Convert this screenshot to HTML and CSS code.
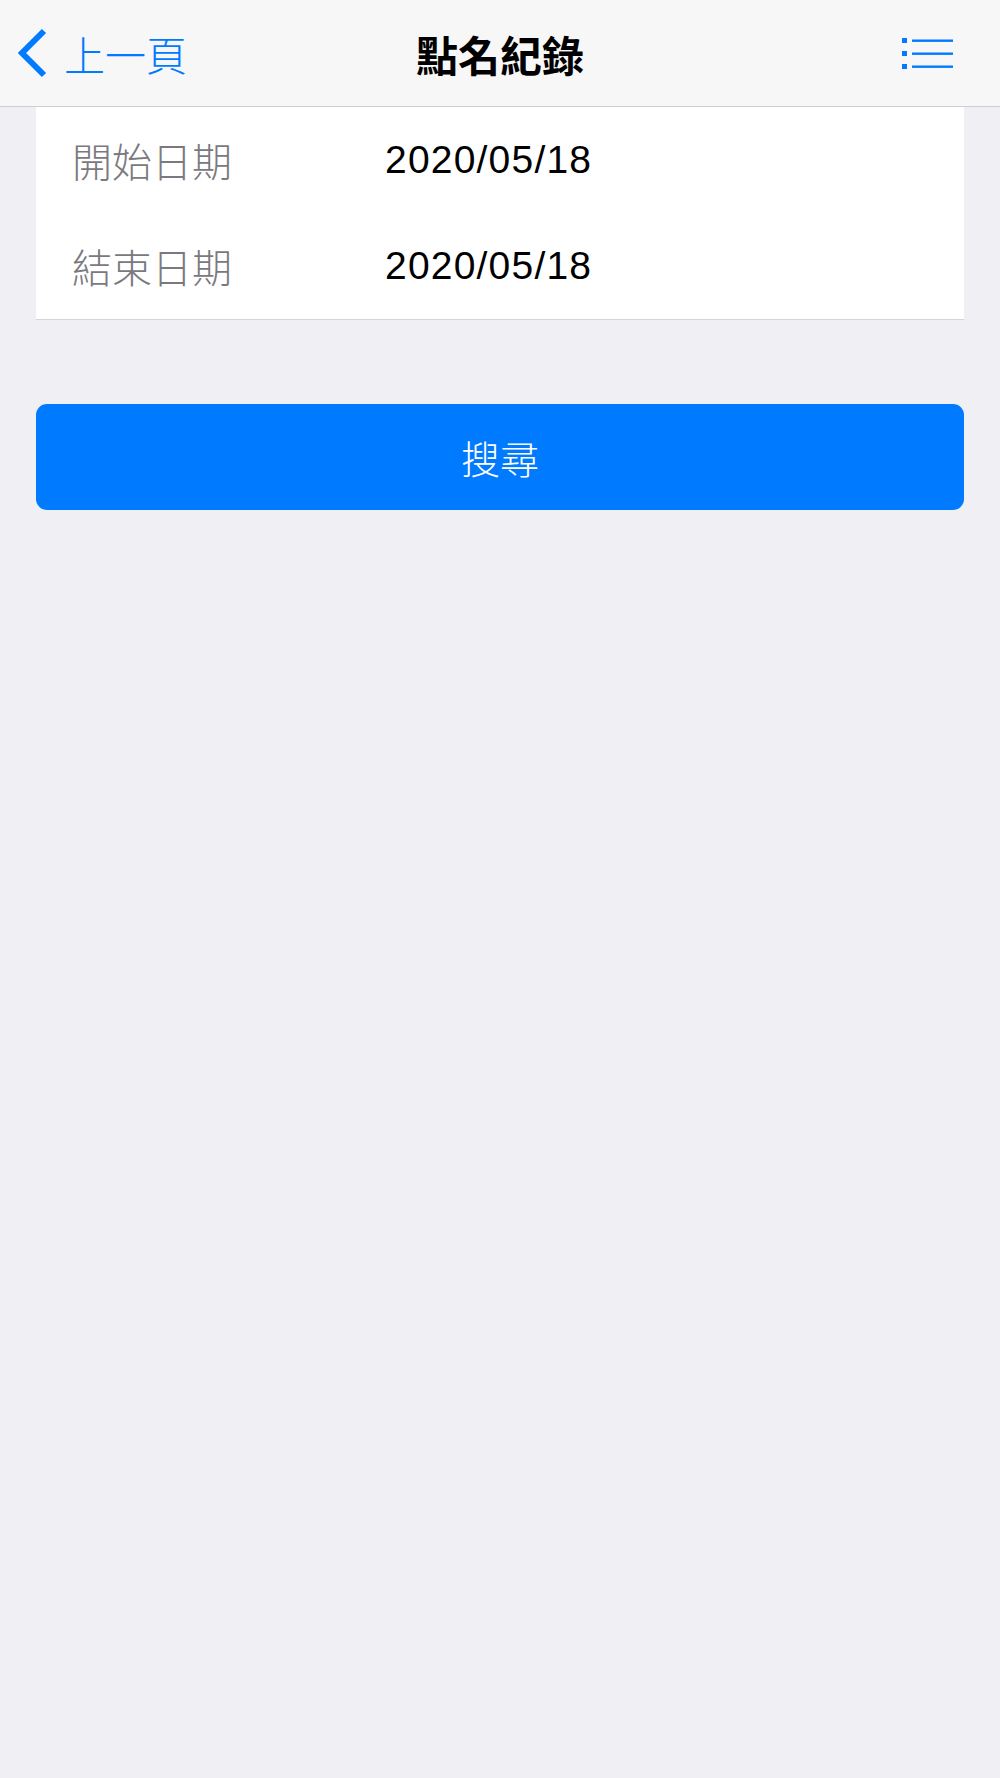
FILE: index.html
```html
<!DOCTYPE html>
<html lang="zh-Hant">
<head>
<meta charset="utf-8">
<link rel="stylesheet" href="styles.css">
<title>點名紀錄</title>
</head>
<body>
<div class="navbar">
	<a class="nav-back" href="#">
		<svg class="chevron" width="34" height="50" viewBox="0 0 34 50">
			<polyline points="28,3 6,25 28,47" fill="none" stroke="#007aff" stroke-width="6"/>
		</svg>
		<span>上一頁</span>
	</a>
	<div class="nav-title">點名紀錄</div>
	<a class="nav-menu" href="#">
		<svg width="52" height="32" viewBox="0 0 52 32">
			<rect x="0" y="0" width="5" height="5" fill="#007aff"/>
			<rect x="0" y="13" width="5" height="5" fill="#007aff"/>
			<rect x="0" y="26" width="5" height="5" fill="#007aff"/>
			<rect x="10" y="1.5" width="41" height="2.4" fill="#007aff"/>
			<rect x="10" y="14.5" width="41" height="2.4" fill="#007aff"/>
			<rect x="10" y="27.5" width="41" height="2.4" fill="#007aff"/>
		</svg>
	</a>
</div>

<div class="form-card">
	<div class="form-row">
		<span class="form-label">開始日期</span>
		<span class="form-value">2020/05/18</span>
	</div>
	<div class="form-row">
		<span class="form-label">結束日期</span>
		<span class="form-value">2020/05/18</span>
	</div>
</div>

<button class="search-btn" type="button">搜尋</button>
</body>
</html>
```

FILE: styles.css
```css
body {
	margin: 0;
	background-color: #efeff4;
	font-family: "Noto Sans CJK TC", "Liberation Sans", sans-serif;
}
a {
	text-decoration: none;
	color: #007aff;
}

/* top bar */
.navbar {
	display: grid;
	grid-template-columns: 1fr auto 1fr;
	align-items: center;
	height: 106px;
	padding: 0 16px;
	background-color: #f7f7f7;
	border-bottom: 1px solid #cfcfd2;
}
.nav-back {
	display: flex;
	align-items: center;
	gap: 14px;
	font-size: 41px;
	font-weight: 300;
	justify-self: start;
}
.nav-back span {
	line-height: 1;
}
.chevron {
	display: block;
}
.nav-title {
	font-size: 42px;
	font-weight: bold;
	color: #000;
}
.nav-menu {
	justify-self: end;
	display: flex;
	margin-right: 30px;
	padding-top: 2px;
}
.nav-menu svg {
	display: block;
}

/* date fields */
.form-card {
	margin: 0 36px;
	background-color: #fff;
	border-bottom: 1px solid #d3d3d8;
}
.form-row {
	display: flex;
	align-items: center;
	height: 106px;
	padding-left: 36px;
}
.form-label {
	width: 313px;
	font-size: 40px;
	font-weight: 300;
	color: #7a7a7e;
}
.form-value {
	font-family: "Liberation Sans", Arial, sans-serif;
	font-size: 39px;
	letter-spacing: 1.2px;
	color: #000;
}

/* button */
.search-btn {
	display: block;
	width: 928px;
	height: 106px;
	margin: 84px 36px 0;
	border: 0;
	border-radius: 11px;
	background-color: #007aff;
	color: #fff;
	font-family: "Noto Sans CJK TC", sans-serif;
	font-size: 39px;
	font-weight: 300;
}
```
